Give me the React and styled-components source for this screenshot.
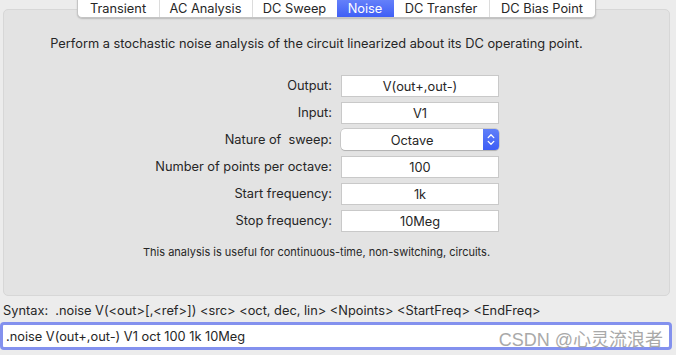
import React from "react";
import styled, { createGlobalStyle } from "styled-components";

const Global = createGlobalStyle`
  html, body { margin: 0; padding: 0; background: #ececec; }
  body { font-family: Inter, "Liberation Sans", Arial, sans-serif; color: #262626; }
  * { box-sizing: border-box; }
`;

const Page = styled.div`
  width: 676px;
  height: 355px;
  overflow: hidden;
  background: #ececec;
  display: flex;
  flex-direction: column;
`;

const TabRow = styled.div`
  position: relative;
  z-index: 2;
  display: flex;
  justify-content: center;
  padding-right: 4px;
  margin-top: -3px;
`;

const TabBar = styled.div`
  display: flex;
  height: 21px;
  background: #fff;
  border: 1px solid #c4c4c4;
  border-top: none;
  border-radius: 0 0 5px 5px;
  box-shadow: 0 0.5px 1.5px rgba(0, 0, 0, 0.18);
  overflow: hidden;
`;

const Tab = styled.div`
  display: flex;
  align-items: center;
  justify-content: center;
  width: ${(p) => p.$w}px;
  font-size: 12.8px;
  padding-top: 2px;
  color: ${(p) => (p.$active ? "#fff" : "#262626")};
  background: ${(p) =>
    p.$active ? "linear-gradient(#6b86fa, #3f5ff6)" : "transparent"};
  border-left: ${(p) => (p.$first || p.$active || p.$afterActive ? "none" : "1px solid #dcdcdc")};
`;

const Panel = styled.div`
  margin: -9px 0 0 3px;
  width: 667px;
  height: 287px;
  background: #e3e3e3;
  border: 1px solid #d7d7d7;
  border-radius: 5px;
  display: flex;
  flex-direction: column;
  padding-top: 26px;
`;

const Description = styled.div`
  font-size: 12.8px;
  line-height: 16px;
  text-align: center;
  padding-right: 40px;
`;

const Form = styled.div`
  display: grid;
  grid-template-columns: 328px 158px;
  column-gap: 9px;
  row-gap: 5px;
  margin-top: 23px;
`;

const Label = styled.div`
  justify-self: end;
  align-self: center;
  font-size: 12.8px;
  line-height: 16px;
  white-space: pre;
`;

const Field = styled.div`
  height: 22px;
  background: #fff;
  border: 1px solid #c9c9c9;
  font-size: 12.8px;
  display: flex;
  align-items: center;
  justify-content: center;
  padding-top: 1px;
`;

const Select = styled.div`
  height: 21px;
  margin-bottom: 1px;
  background: #fff;
  border-radius: 4px;
  box-shadow: 0 0 0 0.5px rgba(0, 0, 0, 0.22), 0 1px 1px rgba(0, 0, 0, 0.12);
  display: flex;
  overflow: hidden;
`;

const SelectValue = styled.div`
  flex: 1;
  display: flex;
  align-items: center;
  justify-content: center;
  font-size: 12.8px;
  padding-top: 1px;
`;

const Stepper = styled.div`
  width: 16px;
  background: linear-gradient(#5f7ff9, #3d5df5);
  display: flex;
  align-items: center;
  justify-content: center;
`;

const Note = styled.div`
  font-size: 11px;
  line-height: 14px;
  margin-top: 13px;
  padding-left: 139px;
`;

const Syntax = styled.div`
  font-size: 12.8px;
  line-height: 16px;
  margin: 7px 0 0 3px;
  white-space: pre;
`;

const CommandBox = styled.div`
  position: relative;
  margin-top: 3px;
  width: 672px;
  height: 28px;
  background: #fff;
  border: 3px solid #8391ee;
  border-radius: 4px;
  display: flex;
  align-items: center;
  padding: 1px 0 0 3px;
  font-size: 12.8px;
`;

const Watermark = styled.span`
  position: absolute;
  right: 6px;
  top: 0px;
  font-size: 18px;
  color: #a9a9a9;
  font-family: "Liberation Sans", "Noto Sans CJK SC", sans-serif;
`;

const tabs = [
  ["Transient", 81],
  ["AC Analysis", 93],
  ["DC Sweep", 85],
  ["Noise", 57],
  ["DC Transfer", 95],
  ["DC Bias Point", 106],
];

const rows = [
  ["Output:", "V(out+,out-)"],
  ["Input:", "V1"],
  ["Nature of  sweep:", "Octave", true],
  ["Number of points per octave:", "100"],
  ["Start frequency:", "1k"],
  ["Stop frequency:", "10Meg"],
];

export default function App() {
  return (
    <>
      <Global />
      <Page>
        <TabRow>
          <TabBar>
            {tabs.map(([t, w], i) => (
              <Tab
                key={t}
                $w={w}
                $first={i === 0}
                $active={t === "Noise"}
                $afterActive={i > 0 && tabs[i - 1][0] === "Noise"}
              >
                {t}
              </Tab>
            ))}
          </TabBar>
        </TabRow>
        <Panel>
          <Description>
            Perform a stochastic noise analysis of the circuit linearized about its DC operating point.
          </Description>
          <Form>
            {rows.map(([l, v, sel]) => (
              <React.Fragment key={l}>
                <Label>{l}</Label>
                {sel ? (
                  <Select>
                    <SelectValue>{v}</SelectValue>
                    <Stepper>
                      <svg width="8" height="13" viewBox="0 0 8 13">
                        <path d="M1.2 4.6 L4 1.8 L6.8 4.6 M1.2 8.4 L4 11.2 L6.8 8.4" fill="none" stroke="#fff" strokeWidth="1.3" strokeLinecap="round" strokeLinejoin="round" />
                      </svg>
                    </Stepper>
                  </Select>
                ) : (
                  <Field>{v}</Field>
                )}
              </React.Fragment>
            ))}
          </Form>
          <Note>This analysis is useful for continuous-time, non-switching, circuits.</Note>
        </Panel>
        <Syntax>{"Syntax:  .noise V(<out>[,<ref>]) <src> <oct, dec, lin> <Npoints> <StartFreq> <EndFreq>"}</Syntax>
        <CommandBox>
          .noise V(out+,out-) V1 oct 100 1k 10Meg
          <Watermark>CSDN @心灵流浪者</Watermark>
        </CommandBox>
      </Page>
    </>
  );
}
